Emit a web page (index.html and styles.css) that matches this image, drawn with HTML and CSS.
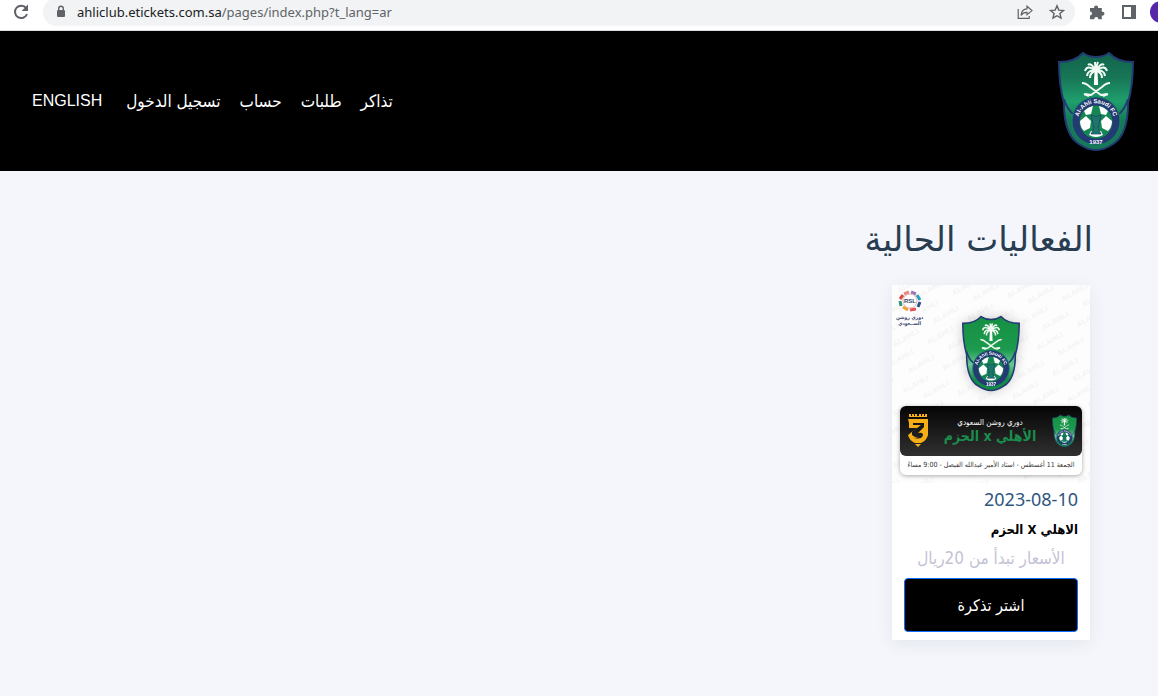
FILE: index.html
```html
<!DOCTYPE html>
<html lang="ar" dir="rtl">
<head>
<meta charset="utf-8">
<meta name="viewport" content="width=device-width, initial-scale=1">
<title>الفعاليات الحالية</title>
<link rel="stylesheet" href="styles.css">
</head>
<body>
<svg class="defs" aria-hidden="true">
  <defs>
    <linearGradient id="teal" x1="0" y1="0" x2="0" y2="1"><stop offset="0" stop-color="#12654c"/><stop offset=".25" stop-color="#177556"/><stop offset=".5" stop-color="#1f9f6d"/><stop offset=".7" stop-color="#167a58"/></linearGradient>
    <linearGradient id="green" x1="0" y1="0" x2="0" y2="1"><stop offset="0" stop-color="#168f43"/><stop offset=".45" stop-color="#1c9a4d"/><stop offset=".65" stop-color="#6cc598"/><stop offset=".85" stop-color="#148a45"/></linearGradient>
    <symbol id="crest" viewBox="0 0 76 101">
      <path class="crest-shield" d="M1 11Q17 11 25 2Q31 6 38 6T51 2Q59 11 75 11Q75 34 70 52Q70 84 55 93Q46 99 38 99T21 93Q6 84 6 52Q1 34 1 11Z"/>
      <path class="crest-line" d="M6 48Q9 58 15 63M70 48Q67 58 61 63"/>
      <g class="crest-palm">
        <path d="M36.5 20h3l.6 14h-4.2z" fill="#fff" stroke="none"/>
        <path d="M38 20Q37 13 37 11M38 20Q33 11 30 14M38 20Q29 13 27 20M38 20Q30 18 29 25M38 20Q32 21 32 27M38 20Q39 13 40 11M38 20Q43 11 46 14M38 20Q47 13 49 20M38 20Q46 18 47 25M38 20Q44 21 44 27"/>
        <path d="M24 32Q28 32 32 36L43 44L49 43M52 32Q48 32 44 36L33 44L27 43M45 45l5-2M31 45l-5-2"/>
      </g>
      <circle cx="38" cy="70" r="24" fill="#233a73" stroke="#148360" stroke-width="1"/>
      <circle cx="38" cy="71" r="16.5" fill="#148653"/>
      <path fill="#fff" d="M22 70l6-5 5 5-1 7-6 3q-4-4-4-10zM54 70l-6-5-5 5 1 7 6 3q4-4 4-10zM26 60q4-4 9-5l-2 8-5 1zM50 60q-4-4-9-5l2 8 5 1zM31 84l2-4h10l2 4q-7 4-14 0z"/>
      <path fill="#1c766a" stroke="#233a73" stroke-width=".7" d="M33 64q5 3 10 0l-3 13 3 6H33l3-6z"/>
      <path id="ring" fill="none" d="M20.8 75.5A18 18 0 1 1 55.2 75.5"/>
      <text class="crest-text" direction="ltr"><textPath href="#ring" startOffset="50%">Al-Ahli Saudi FC</textPath></text>
      <text class="crest-text" x="38" y="93">1937</text>
    </symbol>
    <pattern id="marks" width="46" height="30" patternUnits="userSpaceOnUse" patternTransform="rotate(-30)">
      <text class="watermark" x="2" y="10">ALAHLI</text>
      <text class="watermark" x="17" y="25">ALAHLI</text>
    </pattern>
  </defs>
</svg>

<div class="toolbar" dir="ltr">
  <button class="tool" aria-label="Reload"><svg width="18" height="18" viewBox="0 0 18 18"><path fill="none" stroke="#5f6368" stroke-width="2" d="M14.2 5.2A6.2 6.2 0 1 0 15 11"/><path fill="#5f6368" d="M16 1.6V8H9.6z"/></svg></button>
  <div class="address">
    <svg width="10" height="14" viewBox="0 0 10 14"><rect x="1" y="5" width="8" height="7" rx="1" fill="#5f6368"/><path fill="none" stroke="#5f6368" stroke-width="1.4" d="M2.7 6V3.6a2.3 2.3 0 0 1 4.6 0V6"/></svg>
    <span class="url"><span class="host">ahliclub.etickets.com.sa</span>/pages/index.php?t_lang=ar</span>
    <button class="tool" aria-label="Share"><svg width="16" height="16" viewBox="0 0 16 16" fill="none" stroke="#5f6368" stroke-width="1.2"><path d="M1.2 5v9.4h11V12"/><path d="M10 2.2l5 4.4-5 4.2V8.4Q6 8.2 4 11.4 4.4 5.2 10 4.8z"/></svg></button>
    <button class="tool" aria-label="Bookmark"><svg width="16" height="16" viewBox="0 0 16 16"><path fill="none" stroke="#5f6368" stroke-width="1.4" d="M8 1.8l1.8 4.3 4.7.4-3.6 3 1.1 4.6L8 11.7l-4 2.4 1.1-4.6-3.6-3 4.7-.4z"/></svg></button>
  </div>
  <button class="tool" aria-label="Extensions"><svg width="16" height="16" viewBox="0 0 16 16"><path fill="#5f6368" d="M1 4h4.2a2 2 0 1 1 3.8 0h3.8v3.8a2 2 0 1 1 0 3.8v3.6H9.4a2.1 2.1 0 0 0-4.2 0H1v-3.8a2 2 0 0 0 0-4z"/></svg></button>
  <button class="tool" aria-label="Side panel"><svg width="16" height="16" viewBox="0 0 16 16"><path fill="#5f6368" fill-rule="evenodd" d="M1 1h14v14H1zM3 3v10h7V3z"/></svg></button>
  <div class="avatar"></div>
</div>

<header class="site-header">
  <svg class="crest crest-large" role="img" aria-label="Al-Ahli Saudi FC"><use href="#crest"/></svg>
  <nav class="nav">
    <a href="#">تذاكر</a>
    <a href="#">طلبات</a>
    <a href="#">حساب</a>
    <a href="#">تسجيل الدخول</a>
    <a class="language" href="#">ENGLISH</a>
  </nav>
</header>

<main class="events">
  <h1>الفعاليات الحالية</h1>
  <article class="card">
    <div class="poster">
      <svg class="pattern" aria-hidden="true"><rect width="100%" height="100%" fill="url(#marks)"/></svg>
      <div class="league">
        <svg width="26" height="23" viewBox="0 0 26 23" aria-hidden="true">
          <g fill="none" stroke-width="3"><path stroke="#e68a88" d="M7 4l5-2"/><path stroke="#9c78b8" d="M14 2l5 2"/><path stroke="#27a0c5" d="M20 5l3 5"/><path stroke="#30508b" d="M23 12l-2 5"/><path stroke="#e4525b" d="M19 19l-6 1"/><path stroke="#f0a13c" d="M11 20l-5-3"/><path stroke="#2b9875" d="M4 16l-1-5"/><path stroke="#d84b3e" d="M3 9l3-4"/></g>
          <circle cx="13" cy="11" r="7" fill="#fff" stroke="#e8b3ac" stroke-width="1"/><text class="rsl" x="13" y="13">RSL</text>
        </svg>
        <span>دوري روشن<br>الســعودي</span>
      </div>
      <svg class="crest crest-medium" aria-hidden="true"><use href="#crest"/></svg>
      <div class="fixture">
        <div class="banner">
          <svg class="crest crest-small" aria-hidden="true"><use href="#crest"/></svg>
          <div class="match"><span class="competition">دوري روشن السعودي</span><strong>الأهلي x الحزم</strong></div>
          <svg width="20" height="34" viewBox="0 0 20 34" aria-hidden="true"><path fill="#f5ae16" fill-rule="evenodd" d="M1 0h2v2h1V0h2v2h1V0h2v2h2V0h2v2h1V0h2v2h1V0h2v3H1zM0 5h20v16q-1 5-7 8H7Q1 26 0 21l9-7H1V9zM6 24q8 2 9-3 0-3-5-2l6-6V9H5v2h8L4 18v3q3 3 8 2zM7 30h6l-3 3z"/></svg>
        </div>
        <p class="schedule">الجمعة 11 أغسطس - استاد الأمير عبدالله الفيصل - 9:00 مساءً</p>
      </div>
    </div>
    <div class="details">
      <time datetime="2023-08-10" dir="ltr">2023-08-10</time>
      <h2>الاهلي X الحزم</h2>
      <p class="price">الأسعار تبدأ من 20ريال</p>
      <button class="buy">اشتر تذكرة</button>
    </div>
  </article>
</main>
</body>
</html>
```
FILE: styles.css
```css
* { box-sizing: border-box; }
body {
  margin: 0;
  background: #f4f6fb;
  color: #000;
  font-family: "DejaVu Sans Condensed", "DejaVu Sans", sans-serif;
  overflow-x: hidden;
}
svg { display: block; flex: none; }
h1, h2, p { margin: 0; font-weight: 400; }
button { border: 0; padding: 0; background: none; font: inherit; cursor: pointer; }
.defs { position: absolute; width: 0; height: 0; }

.toolbar {
  display: flex;
  align-items: center;
  gap: 16px;
  height: 31px;
  padding: 0 0 6px 12px;
  overflow: hidden;
  background: #fff;
  border-bottom: 1px solid #dadce0;
}
.address {
  display: flex;
  flex: 1;
  align-items: center;
  gap: 16px;
  height: 28px;
  margin-inline: -3px -2px;
  padding: 0 10px 0 13px;
  border-radius: 14px;
  background: #f1f3f4;
}
.url {
  flex: 1;
  margin-left: -5px;
  color: #5f6368;
  font: 13px/18px "Noto Sans", "Open Sans", sans-serif;
  white-space: nowrap;
}
.host { color: #202124; }
.avatar {
  flex: none;
  width: 22px;
  height: 22px;
  margin: 0 -14px 0 -3px;
  border-radius: 50%;
  background: #5428a8;
}

.site-header {
  display: flex;
  align-items: center;
  justify-content: space-between;
  min-height: 140px;
  padding: 16px 24px 16px 32px;
  background: #000;
}
.nav { display: flex; align-items: center; gap: 19px; }
.nav a { color: #fff; font-size: 17px; line-height: 24px; text-decoration: none; white-space: nowrap; }
.nav .language { margin-right: 5px; font-family: "Liberation Sans", Arial, sans-serif; font-size: 16px; }

.crest { --shield: url(#green); }
.crest-large { --shield: url(#teal); width: 76px; height: 101px; }
.crest-medium { position: relative; width: 58px; height: 77px; margin: 0 auto; filter: drop-shadow(0 0 6px #0003); }
.crest-small { width: 25px; height: 34px; }
.crest-shield { fill: var(--shield); stroke: #233a73; stroke-width: 2; }
.crest-line { fill: none; stroke: #233a73; stroke-width: 2; }
.crest-palm { fill: none; stroke: #f2faf4; stroke-width: 2; }
.crest-text { fill: #fff; font: bold 6px "Liberation Sans", Arial, sans-serif; text-anchor: middle; }

.events { padding: 40px 65px 56px; }
.events h1 { margin: 0 0 18px; color: #283d50; font-family: "DejaVu Sans", sans-serif; font-size: 34px; line-height: 56px; }
.card { width: 198px; margin-right: 3px; background: #fff; box-shadow: 0 4px 16px #23304a14; }

.poster { position: relative; padding: 30px 8px 8px; background: #fdfdfd; }
.pattern { position: absolute; inset: 0; width: 100%; height: 100%; }
.watermark { fill: #f3f3f3; font: bold 8px "Liberation Sans", Arial, sans-serif; direction: ltr; }
.league {
  position: absolute;
  top: 5px;
  left: 4px;
  display: flex;
  flex-direction: column;
  align-items: center;
  color: #34436f;
  font-size: 5px;
  font-weight: 700;
  line-height: 6px;
  text-align: center;
}
.league span { margin-top: 1px; }
.rsl { fill: #34436f; font: bold 6px "Liberation Sans", Arial, sans-serif; text-anchor: middle; direction: ltr; }
.fixture { position: relative; margin-top: 14px; border-radius: 6px; background: #fff; box-shadow: 0 1px 4px #0005; }
.banner {
  display: flex;
  align-items: center;
  justify-content: space-between;
  height: 50px;
  padding: 0 5px 0 8px;
  border-radius: 6px;
  background: linear-gradient(#050505, #303030);
}
.match { color: #1b8d4d; text-align: center; white-space: nowrap; }
.match strong { display: block; font-size: 14px; line-height: 17px; }
.competition { display: block; color: #fff; font-size: 8px; line-height: 10px; }
.schedule { color: #333; font-size: 7px; line-height: 19px; text-align: center; white-space: nowrap; }

.details { display: flex; flex-direction: column; padding: 4px 12px 8px; }
.details time { color: #30557f; font: 18px/24px "Noto Sans", sans-serif; text-align: right; }
.details h2 { margin-top: 7px; font-size: 13px; font-weight: 700; line-height: 24px; }
.price { margin: 4px 0 8px; color: #c3c3d5; font-size: 17px; line-height: 24px; text-align: center; white-space: nowrap; }
.buy { height: 54px; border: 1px solid #0d6efd; border-radius: 4px; background: #000; color: #fff; font-size: 16px; }
```
